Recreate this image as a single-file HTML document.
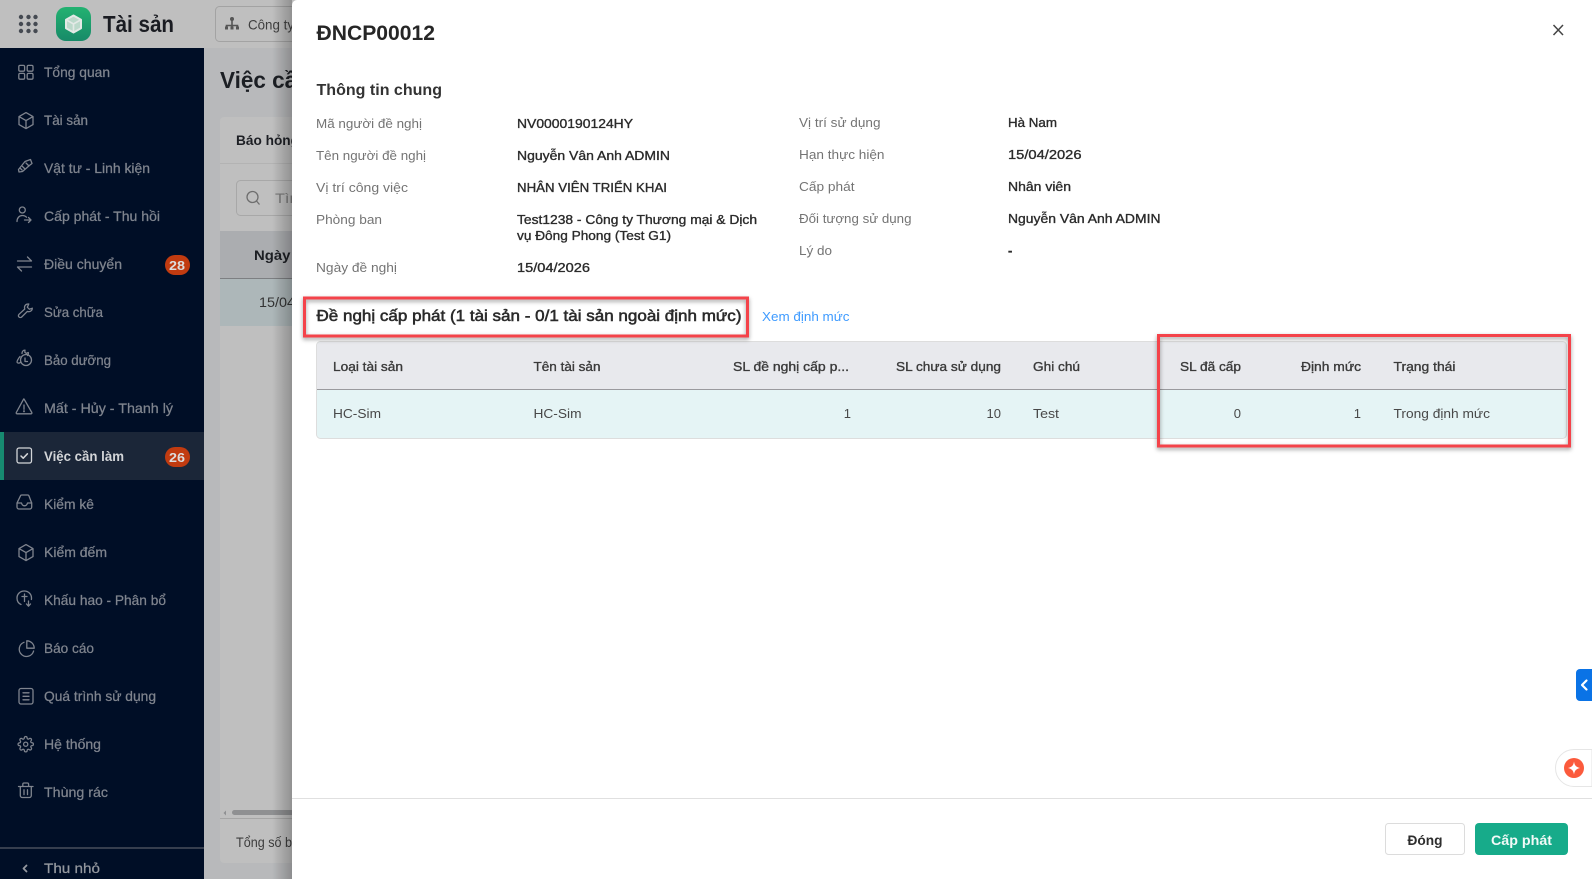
<!DOCTYPE html>
<html lang="vi">
<head>
<meta charset="utf-8">
<title>ĐNCP00012</title>
<style>
html,body{margin:0;padding:0;width:1592px;height:879px;overflow:hidden;background:#fff}
svg{display:block}
text{font-family:"Liberation Sans","Noto Sans CJK SC",sans-serif;white-space:pre}
.nav{font-size:14px;fill:#7f848e;stroke:#7f848e;stroke-width:.25}
.ic{fill:none;stroke:#7f848e;stroke-width:1.3;stroke-linecap:round;stroke-linejoin:round}
.lb{font-size:13px;fill:#747474}
.vl{font-size:13px;fill:#2b2b2b;stroke:#2b2b2b;stroke-width:.35}
.th{font-size:13px;fill:#3a3a3a;stroke:#3a3a3a;stroke-width:.35}
.td{font-size:13px;fill:#484848}
.box{fill:none;stroke:#f4434a;stroke-width:3;filter:drop-shadow(0 2px 2px rgba(0,0,0,.4))}
</style>
</head>
<body>
<svg width="1592" height="879" viewBox="0 0 1592 879" xmlns="http://www.w3.org/2000/svg">
<defs>
<linearGradient id="lg" x1="0" y1="0" x2="0" y2="1"><stop offset="0" stop-color="#23b271"/><stop offset="1" stop-color="#178a68"/></linearGradient>
<linearGradient id="ms" x1="0" y1="0" x2="1" y2="0"><stop offset="0" stop-color="#000" stop-opacity="0"/><stop offset="1" stop-color="#000" stop-opacity=".24"/></linearGradient>
</defs>

<!-- page background (dimmed) -->
<rect width="1592" height="879" fill="#b8b9bb"/>
<rect width="1592" height="48" fill="#bfbfbf"/>

<!-- top bar -->
<g fill="#454a52">
<circle cx="21" cy="17" r="2.2"/><circle cx="28.5" cy="17" r="2.2"/><circle cx="35.5" cy="17" r="2.2"/>
<circle cx="21" cy="24" r="2.2"/><circle cx="28.5" cy="24" r="2.2"/><circle cx="35.5" cy="24" r="2.2"/>
<circle cx="21" cy="31" r="2.2"/><circle cx="28.5" cy="31" r="2.2"/><circle cx="35.5" cy="31" r="2.2"/>
</g>
<rect x="56" y="7" width="35" height="34" rx="10" fill="url(#lg)"/>
<path d="M73.5 15.5l7.5 4.2v8.6l-7.5 4.2-7.5-4.2v-8.6z" fill="#bcd9cb" stroke="#e3e9e6" stroke-width="2" stroke-linejoin="round"/>
<path d="M66.5 20l7 4 7-4M73.5 24v8" fill="none" stroke="#e3e9e6" stroke-width="1.6"/>
<text x="103" y="32" font-size="23" font-weight="700" fill="#1a1c22" textLength="71" lengthAdjust="spacingAndGlyphs">Tài sản</text>
<rect x="215.5" y="6.5" width="100" height="35" rx="4" fill="#bfbfbf" stroke="#a3a3a3"/>
<path d="M232 18.5v4M226.5 29v-3.5h11V29M232 22.5v6.5" fill="none" stroke="#555" stroke-width="1.6"/>
<circle cx="232" cy="19" r="2" fill="#555"/>
<rect x="225" y="26.5" width="3" height="3" fill="#555"/><rect x="230.5" y="26.5" width="3" height="3" fill="#555"/><rect x="236" y="26.5" width="3" height="3" fill="#555"/>
<text x="248" y="29.5" font-size="14" fill="#3f3f3f" textLength="46" lengthAdjust="spacingAndGlyphs">Công ty</text>

<!-- sidebar -->
<rect x="0" y="48" width="204" height="831" fill="#000e26"/>
<rect x="0" y="432" width="204" height="48" fill="#1b2638"/>
<rect x="0" y="432" width="4" height="48" fill="#178a70"/>

<g class="ic">
<rect x="18.8" y="65.4" width="5.8" height="5.8" rx="1.3"/><rect x="27.2" y="65.4" width="5.8" height="5.8" rx="1.3"/><rect x="18.8" y="73.4" width="5.8" height="5.8" rx="1.3"/><rect x="27.2" y="73.4" width="5.8" height="5.8" rx="1.3"/>
<path d="M26 112.6l7 4v8l-7 4-7-4v-8zM19 116.6l7 4 7-4M26 120.6v8"/>
<path d="M25 161.5l5.5-2 1.5 4-2 1.5-7.5 6.5-3.5 0.5-0.5-2.5zM26 163l3 3M22.5 166.5l2 2M20.5 168.5l1.5 1.5"/>
<circle cx="22.3" cy="210" r="3"/><path d="M17 221.5c0-3.6 2.3-6 5.3-6 1.8 0 3.2.6 4.2 1.7M24.5 220h6.5M28.5 217.5l2.5 2.5-2.5 2.5"/>
<path d="M17.5 261h14l-4-4M31.5 267h-14l4 4"/>
<path d="M28 304c-2 0-3.500 1.500-3.500 3.500 0 .6.100 1 .3 1.500l-5.800 5.300c-.8.8-.8 2 0 2.700s2 .7 2.700 0l5.600-5.600c.5.200 1 .3 1.500.3 2 0 3.500-1.600 3.500-3.500l-3 1-2-2 1.500-3.200z"/>
<path d="M20 356.500c-1.300 1.500-3.500 5-2.800 6 1 1.300 2.800.4 3.800-.5M22 353.500c0-1.800 1-3.300 3-3.300l-.2 2 1.500 1.200 2-.9c.3 1 0 2-.8 3"/>
<circle cx="26" cy="360" r="5.500"/><path d="M25 358v3.500h2.500"/>
<path d="M24.200 399.300l7.600 13.200c.3.600 0 1.300-.7 1.300H17c-.7 0-1-.7-.7-1.300l7.200-13.200c.2-.5.500-.5.700 0zM24 405v4.300"/>
<circle cx="24" cy="411.300" r=".4"/>
<path d="M17 503l3.500-7.200c.2-.5.700-.8 1.200-.8h6c.5 0 1 .3 1.200.8l2.800 7.200v4c0 1.100-.9 2-2 2H19c-1.100 0-2-.9-2-2zM17 503h4.500c.5 2 1.700 2.800 3 2.800s2.500-.8 3-2.800h4.300"/>
<path d="M26 544.600l7 4v8l-7 4-7-4v-8zM19 548.600l7 4 7-4M26 552.600v8"/>
<path d="M21 604.500c-2.500-1.100-4-3.400-4-6.500 0-4 3.200-7 7.200-7 4.100 0 7.300 3 7.300 7 0 .5 0 1-.1 1.500M24.500 594v7.500M22 596.500h5M28.500 601v5M26.500 604l2 2.200 2-2.200"/>
<path d="M24 642.300a7.300 7.300 0 1 0 9.600 8.700M26.800 640.800v7.400h7.400a7.400 7.400 0 0 0-7.400-7.400z"/>
<rect x="19" y="688.500" width="14" height="15.500" rx="2"/><path d="M23 692.800h6M23 696.300h6M23 699.800h6"/>
<g transform="translate(17.300 735.800) scale(.7)" stroke-width="1.800"><circle cx="12" cy="12" r="3"/><path d="M19.400 15a1.650 1.650 0 0 0 .33 1.820l.06.06a2 2 0 0 1 0 2.830 2 2 0 0 1-2.830 0l-.06-.06a1.650 1.650 0 0 0-1.820-.33 1.650 1.650 0 0 0-1 1.510V21a2 2 0 0 1-2 2 2 2 0 0 1-2-2v-.09A1.650 1.650 0 0 0 9 19.400a1.650 1.650 0 0 0-1.820.33l-.06.06a2 2 0 0 1-2.830 0 2 2 0 0 1 0-2.830l.06-.06a1.650 1.650 0 0 0 .33-1.820 1.650 1.650 0 0 0-1.510-1H3a2 2 0 0 1-2-2 2 2 0 0 1 2-2h.09A1.650 1.650 0 0 0 4.600 9a1.650 1.650 0 0 0-.33-1.820l-.06-.06a2 2 0 0 1 0-2.830 2 2 0 0 1 2.830 0l.06.06a1.650 1.650 0 0 0 1.820.33H9a1.650 1.650 0 0 0 1-1.510V3a2 2 0 0 1 2-2 2 2 0 0 1 2 2v.09a1.650 1.650 0 0 0 1 1.510 1.650 1.650 0 0 0 1.820-.33l.06-.06a2 2 0 0 1 2.830 0 2 2 0 0 1 0 2.830l-.06.06a1.650 1.650 0 0 0-.33 1.820V9a1.650 1.650 0 0 0 1.510 1H21a2 2 0 0 1 2 2 2 2 0 0 1-2 2h-.09a1.650 1.650 0 0 0-1.510 1z"/></g>
<path d="M18.500 786.500h14.500M22.800 786.500v-2.200c0-.7.500-1.300 1.200-1.300h3.400c.7 0 1.200.6 1.200 1.300v2.200M20.300 786.500v9c0 1.100.9 2 2 2h7c1.100 0 2-.9 2-2v-9M24 789.800v4.800M27.500 789.800v4.800"/>
</g>
<rect x="17" y="448" width="14.500" height="15" rx="2" fill="none" stroke="#d3d5d8" stroke-width="1.300"/>
<path d="M21 456l2.200 2.200 4.200-4.400" fill="none" stroke="#d3d5d8" stroke-width="1.500" stroke-linecap="round" stroke-linejoin="round"/>

<g class="nav">
<text x="44" y="77" textLength="66" lengthAdjust="spacingAndGlyphs">Tổng quan</text>
<text x="44" y="125" textLength="44" lengthAdjust="spacingAndGlyphs">Tài sản</text>
<text x="44" y="173" textLength="106" lengthAdjust="spacingAndGlyphs">Vật tư - Linh kiện</text>
<text x="44" y="221" textLength="116" lengthAdjust="spacingAndGlyphs">Cấp phát - Thu hồi</text>
<text x="44" y="269" textLength="78" lengthAdjust="spacingAndGlyphs">Điều chuyển</text>
<text x="44" y="317" textLength="59" lengthAdjust="spacingAndGlyphs">Sửa chữa</text>
<text x="44" y="365" textLength="67" lengthAdjust="spacingAndGlyphs">Bảo dưỡng</text>
<text x="44" y="413" textLength="129" lengthAdjust="spacingAndGlyphs">Mất - Hủy - Thanh lý</text>
<text x="44" y="461" textLength="80" lengthAdjust="spacingAndGlyphs" font-weight="700" style="fill:#d3d5d8;stroke:none">Việc cần làm</text>
<text x="44" y="509" textLength="50" lengthAdjust="spacingAndGlyphs">Kiểm kê</text>
<text x="44" y="557" textLength="63" lengthAdjust="spacingAndGlyphs">Kiểm đếm</text>
<text x="44" y="605" textLength="122" lengthAdjust="spacingAndGlyphs">Khấu hao - Phân bổ</text>
<text x="44" y="653" textLength="50" lengthAdjust="spacingAndGlyphs">Báo cáo</text>
<text x="44" y="701" textLength="112" lengthAdjust="spacingAndGlyphs">Quá trình sử dụng</text>
<text x="44" y="749" textLength="57" lengthAdjust="spacingAndGlyphs">Hệ thống</text>
<text x="44" y="797" textLength="64" lengthAdjust="spacingAndGlyphs">Thùng rác</text>
<text x="44" y="873" textLength="56" lengthAdjust="spacingAndGlyphs" style="fill:#94989f;stroke:#94989f">Thu nhỏ</text>
</g>
<rect x="165" y="255" width="25" height="20" rx="10" fill="#c13b10"/>
<text x="169" y="270" font-size="13" font-weight="700" fill="#ddd" textLength="16" lengthAdjust="spacingAndGlyphs">28</text>
<rect x="165" y="447" width="25" height="20" rx="10" fill="#c13b10"/>
<text x="169" y="462" font-size="13" font-weight="700" fill="#ddd" textLength="16" lengthAdjust="spacingAndGlyphs">26</text>
<rect x="0" y="847.500" width="204" height="1" fill="#6b6f76"/>
<path d="M26.500 865.500l-3 3 3 3" fill="none" stroke="#94989f" stroke-width="1.800" stroke-linecap="round" stroke-linejoin="round"/>

<!-- background page content -->
<text x="220" y="88" font-size="23" font-weight="700" fill="#1c1f24" textLength="136" lengthAdjust="spacingAndGlyphs">Việc cần làm</text>
<rect x="220" y="117" width="120" height="746" rx="4" fill="#bfbfbf"/>
<rect x="220" y="163" width="120" height="1" fill="#b3b3b3"/>
<text x="236" y="145" font-size="14" font-weight="700" fill="#1d1f24" textLength="63" lengthAdjust="spacingAndGlyphs">Báo hỏng</text>
<rect x="236.500" y="180.500" width="100" height="35" rx="4" fill="none" stroke="#a8a8a8"/>
<circle cx="252.500" cy="197" r="5.500" fill="none" stroke="#6e6e6e" stroke-width="1.300"/>
<path d="M256.500 201l3 3.500" stroke="#6e6e6e" stroke-width="1.300"/>
<text x="275" y="203" font-size="14" fill="#7a7a7a" textLength="28" lengthAdjust="spacingAndGlyphs">Tìm</text>
<rect x="220" y="231" width="120" height="47" fill="#abadb0"/>
<rect x="220" y="278" width="120" height="1" fill="#7d7f82"/>
<text x="254" y="260" font-size="14" font-weight="700" fill="#1d1f24" textLength="58" lengthAdjust="spacingAndGlyphs">Ngày đề</text>
<rect x="220" y="279" width="120" height="47" fill="#adb7b9"/>
<text x="259" y="307" font-size="14" fill="#333" textLength="72" lengthAdjust="spacingAndGlyphs">15/04/2026</text>
<rect x="232" y="810" width="70" height="5" rx="2.500" fill="#8f9092"/>
<path d="M226 810.500l-2.500 2.500 2.500 2.500z" fill="#8f9092"/>
<rect x="220" y="818" width="120" height="1" fill="#a6a6a6"/>
<text x="236" y="847" font-size="14" fill="#3d3d3d" textLength="70" lengthAdjust="spacingAndGlyphs">Tổng số bản</text>

<!-- modal shadow & modal -->
<rect x="272" y="0" width="20" height="879" fill="url(#ms)"/>
<path d="M297 0H1592V879H292V5a5 5 0 0 1 5-5z" fill="#fff"/>

<text x="316.500" y="40" font-size="21" font-weight="700" fill="#262626" textLength="118.500" lengthAdjust="spacingAndGlyphs">ĐNCP00012</text>
<path d="M1553.500 25l9.500 10M1563 25l-9.500 10" stroke="#444" stroke-width="1.500" fill="none"/>
<text x="316.500" y="95" font-size="16" font-weight="700" fill="#333" textLength="125.500" lengthAdjust="spacingAndGlyphs">Thông tin chung</text>

<g class="lb">
<text x="316" y="128" textLength="106" lengthAdjust="spacingAndGlyphs">Mã người đề nghị</text>
<text x="316" y="160" textLength="110" lengthAdjust="spacingAndGlyphs">Tên người đề nghị</text>
<text x="316" y="192" textLength="92" lengthAdjust="spacingAndGlyphs">Vị trí công việc</text>
<text x="316" y="224" textLength="66" lengthAdjust="spacingAndGlyphs">Phòng ban</text>
<text x="316" y="272" textLength="81" lengthAdjust="spacingAndGlyphs">Ngày đề nghị</text>
<text x="799" y="127" textLength="81.500" lengthAdjust="spacingAndGlyphs">Vị trí sử dụng</text>
<text x="799" y="159" textLength="85.500" lengthAdjust="spacingAndGlyphs">Hạn thực hiện</text>
<text x="799" y="191" textLength="55.500" lengthAdjust="spacingAndGlyphs">Cấp phát</text>
<text x="799" y="223" textLength="112.500" lengthAdjust="spacingAndGlyphs">Đối tượng sử dụng</text>
<text x="799" y="255" textLength="33" lengthAdjust="spacingAndGlyphs">Lý do</text>
</g>
<g class="vl">
<text x="517" y="128" textLength="116" lengthAdjust="spacingAndGlyphs">NV0000190124HY</text>
<text x="517" y="160" textLength="153" lengthAdjust="spacingAndGlyphs">Nguyễn Vân Anh ADMIN</text>
<text x="517" y="192" textLength="150" lengthAdjust="spacingAndGlyphs">NHÂN VIÊN TRIỂN KHAI</text>
<text x="517" y="224" textLength="240" lengthAdjust="spacingAndGlyphs">Test1238 - Công ty Thương mại &amp; Dịch</text>
<text x="517" y="240" textLength="154" lengthAdjust="spacingAndGlyphs">vụ Đông Phong (Test G1)</text>
<text x="517" y="272" textLength="73" lengthAdjust="spacingAndGlyphs">15/04/2026</text>
<text x="1008" y="127" textLength="49" lengthAdjust="spacingAndGlyphs">Hà Nam</text>
<text x="1008" y="159" textLength="73.500" lengthAdjust="spacingAndGlyphs">15/04/2026</text>
<text x="1008" y="191" textLength="63" lengthAdjust="spacingAndGlyphs">Nhân viên</text>
<text x="1008" y="223" textLength="152.500" lengthAdjust="spacingAndGlyphs">Nguyễn Vân Anh ADMIN</text>
<text x="1008" y="255" font-weight="700">-</text>
</g>

<text x="316.500" y="321" font-size="16" fill="#2b2b2b" stroke="#2b2b2b" stroke-width=".55" textLength="425" lengthAdjust="spacingAndGlyphs">Đề nghị cấp phát (1 tài sản - 0/1 tài sản ngoài định mức)</text>
<text x="762" y="321" font-size="13" fill="#3f9bff" textLength="87.500" lengthAdjust="spacingAndGlyphs">Xem định mức</text>

<!-- table -->
<rect x="316.500" y="341.500" width="1250" height="97" rx="4" fill="#e5f4f5" stroke="#dddddd"/>
<path d="M317 389V346a4 4 0 0 1 4-4H1562a4 4 0 0 1 4 4V389z" fill="#e8e9ed"/>
<rect x="317" y="389" width="1249" height="1" fill="#9a9a9e"/>
<g class="th">
<text x="333" y="371" textLength="70" lengthAdjust="spacingAndGlyphs">Loại tài sản</text>
<text x="533.500" y="371" textLength="67" lengthAdjust="spacingAndGlyphs">Tên tài sản</text>
<text x="733" y="371" textLength="116" lengthAdjust="spacingAndGlyphs">SL đề nghị cấp p...</text>
<text x="896" y="371" textLength="105" lengthAdjust="spacingAndGlyphs">SL chưa sử dụng</text>
<text x="1033" y="371" textLength="47" lengthAdjust="spacingAndGlyphs">Ghi chú</text>
<text x="1180" y="371" textLength="61" lengthAdjust="spacingAndGlyphs">SL đã cấp</text>
<text x="1301" y="371" textLength="60" lengthAdjust="spacingAndGlyphs">Định mức</text>
<text x="1393.500" y="371" textLength="62" lengthAdjust="spacingAndGlyphs">Trạng thái</text>
</g>
<g class="td">
<text x="333" y="418" textLength="48" lengthAdjust="spacingAndGlyphs">HC-Sim</text>
<text x="533.500" y="418" textLength="48" lengthAdjust="spacingAndGlyphs">HC-Sim</text>
<text x="851" y="418" text-anchor="end">1</text>
<text x="1001" y="418" text-anchor="end">10</text>
<text x="1033" y="418" textLength="26" lengthAdjust="spacingAndGlyphs">Test</text>
<text x="1241" y="418" text-anchor="end">0</text>
<text x="1361" y="418" text-anchor="end">1</text>
<text x="1393.500" y="418" textLength="96.500" lengthAdjust="spacingAndGlyphs">Trong định mức</text>
</g>

<!-- annotation boxes -->
<rect class="box" x="304.500" y="298" width="443" height="38"/>
<rect class="box" x="1158.500" y="335.500" width="411" height="110.500"/>

<!-- footer -->
<rect x="292" y="798" width="1300" height="1" fill="#e0e0e0"/>
<rect x="1385.500" y="823.500" width="79" height="31" rx="3" fill="#fff" stroke="#dcdcdc"/>
<text x="1407.500" y="845" font-size="14" font-weight="700" fill="#2e2e2e" textLength="35" lengthAdjust="spacingAndGlyphs">Đóng</text>
<rect x="1475" y="823" width="93" height="32" rx="4" fill="#17ab8a"/>
<text x="1491" y="845" font-size="14" font-weight="700" fill="#f3faf8" textLength="61" lengthAdjust="spacingAndGlyphs">Cấp phát</text>

<!-- floating widgets -->
<path d="M1592 669h-12a4 4 0 0 0-4 4v24a4 4 0 0 0 4 4h12z" fill="#0a73e6"/>
<path d="M1586.500 680.500l-4.500 4.500 4.500 4.500" fill="none" stroke="#fff" stroke-width="2.200" stroke-linecap="round" stroke-linejoin="round"/>
<path d="M1592 749.500h-18a18.500 18.500 0 0 0 0 37h18z" fill="#fff" stroke="#e6e6e6"/>
<circle cx="1574" cy="768" r="10" fill="#fb5a3c"/>
<path d="M1574 761.500c.6 4 2 5.500 6 6.500-4 1-5.400 2.500-6 6.500-.6-4-2-5.500-6-6.500 4-1 5.400-2.500 6-6.500z" fill="#fff"/>
</svg>
</body>
</html>
